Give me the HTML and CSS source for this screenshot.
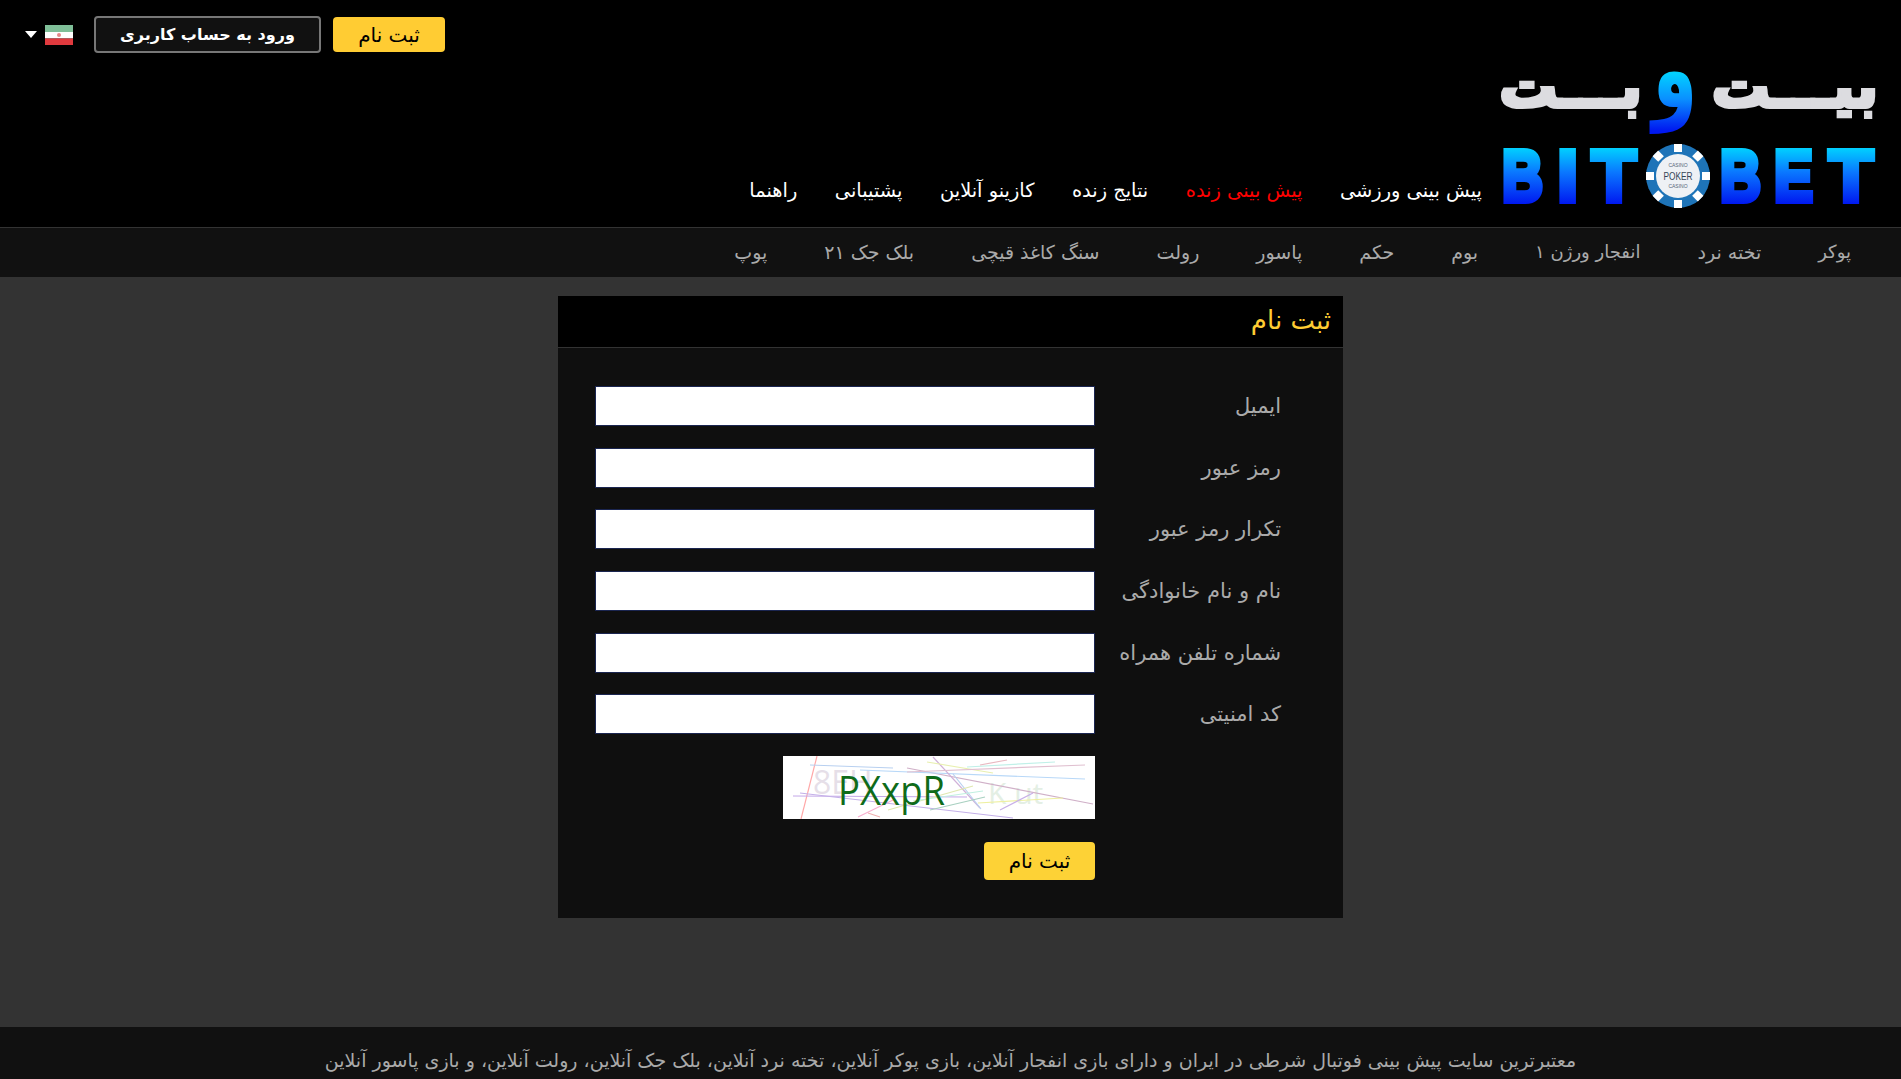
FILE: index.html
```html
<!DOCTYPE html>
<html lang="fa" dir="rtl">
<head>
<meta charset="utf-8">
<title>ثبت نام</title>
<link rel="stylesheet" href="styles.css">
</head>
<body>
<header class="header">
  <div class="topbar">
    <a class="btn btn-yellow">ثبت نام</a>
    <a class="btn btn-dark">ورود به حساب کاربری</a>
    <div class="lang">
      <svg class="flag" viewBox="0 0 28 20" width="28" height="20">
        <rect width="28" height="7" fill="#7fbf98"/>
        <rect y="7" width="28" height="6.5" fill="#fff"/>
        <rect y="13.5" width="28" height="6.5" fill="#e03a3e"/>
        <circle cx="14" cy="10" r="2" fill="#e58a8a"/>
      </svg>
      <span class="caret"></span>
    </div>
  </div>
  <div class="mainbar">
    <svg class="logo" viewBox="0 0 378 146" width="378" height="146">
      <defs>
        <linearGradient id="lg" gradientUnits="userSpaceOnUse" x1="0" y1="-32" x2="0" y2="19">
          <stop offset="0" stop-color="#00e0ff"/>
          <stop offset=".5" stop-color="#0a90ff"/>
          <stop offset="1" stop-color="#0018f0"/>
        </linearGradient>
        <linearGradient id="lgu" gradientUnits="userSpaceOnUse" x1="0" y1="82" x2="0" y2="140">
          <stop offset="0" stop-color="#00d8ff"/>
          <stop offset=".45" stop-color="#0a78ff"/>
          <stop offset="1" stop-color="#0018f0"/>
        </linearGradient>
      </defs>
      <text class="logo-fa" x="377" y="43" text-anchor="start">بیـــت</text>
      <text class="logo-fa" x="141" y="43" text-anchor="start">بـــت</text>
      <text class="logo-vav" text-anchor="middle" fill="url(#lg)" transform="translate(174 43) scale(.82 1.25)">و</text>
      <g class="logo-en">
        <text x="1" y="137" textLength="41" lengthAdjust="spacingAndGlyphs">B</text>
        <text x="56.5" y="137">I</text>
        <text x="91" y="137" textLength="44" lengthAdjust="spacingAndGlyphs">T</text>
        <text x="219" y="137" textLength="41" lengthAdjust="spacingAndGlyphs">B</text>
        <text x="273" y="137" textLength="39" lengthAdjust="spacingAndGlyphs">E</text>
        <text x="328" y="137" textLength="44" lengthAdjust="spacingAndGlyphs">T</text>
      </g>
      <circle cx="177" cy="112" r="32" fill="#1e74b8"/>
      <circle cx="177" cy="112" r="22" fill="#eef1f5"/>
      <g fill="#fff">
        <rect x="173" y="80" width="8" height="8"/>
        <rect x="173" y="136" width="8" height="8"/>
        <rect x="145" y="108" width="8" height="8"/>
        <rect x="201" y="108" width="8" height="8"/>
        <rect x="173" y="80" width="8" height="8" transform="rotate(45 177 112)"/>
        <rect x="173" y="80" width="8" height="8" transform="rotate(135 177 112)"/>
        <rect x="173" y="80" width="8" height="8" transform="rotate(225 177 112)"/>
        <rect x="173" y="80" width="8" height="8" transform="rotate(315 177 112)"/>
      </g>
      <text class="chip-s" x="177" y="103" text-anchor="middle">CASINO</text>
      <text class="chip-b" x="177" y="116" text-anchor="middle" textLength="29" lengthAdjust="spacingAndGlyphs">POKER</text>
      <text class="chip-s" x="177" y="124" text-anchor="middle">CASINO</text>
    </svg>
    <nav class="nav">
      <a>پیش بینی ورزشی</a>
      <a class="live">پیش بینی زنده</a>
      <a>نتایج زنده</a>
      <a>کازینو آنلاین</a>
      <a>پشتیبانی</a>
      <a>راهنما</a>
    </nav>
  </div>
</header>
<nav class="subnav">
  <a class="narrow">پوکر</a><a>تخته نرد</a><a class="narrow">انفجار ورژن ۱</a><a>بوم</a><a>حکم</a><a>پاسور</a><a>رولت</a><a>سنگ کاغذ قیچی</a><a>بلک جک ۲۱</a><a>پوپ</a>
</nav>
<main class="content">
  <section class="panel">
    <h1 class="panel-title">ثبت نام</h1>
    <form class="form">
      <label class="label">ایمیل</label><input class="input" type="text">
      <label class="label">رمز عبور</label><input class="input" type="password">
      <label class="label">تکرار رمز عبور</label><input class="input" type="password">
      <label class="label">نام و نام خانوادگی</label><input class="input" type="text">
      <label class="label">شماره تلفن همراه</label><input class="input" type="text">
      <label class="label">کد امنیتی</label><input class="input" type="text">
      <span></span>
      <svg class="captcha" viewBox="0 0 312 63" width="312" height="63">
        <rect width="312" height="63" fill="#fff"/>
        <text class="cap-ghost" x="30" y="38">8EH</text>
        <text class="cap-ghost2" x="205" y="48">K ut</text>
        <g class="cap-noise" fill="none">
          <path d="M34 0L18 63" stroke="#ffa8a8"/>
          <path d="M27 9L110 12" stroke="#b8d0f0" stroke-width="2"/>
          <path d="M124 12L310 48" stroke="#d0b0c8"/>
          <path d="M10 40L184 41" stroke="#c4a8e8" stroke-width="2"/>
          <path d="M17 37L230 62" stroke="#c4b0e8"/>
          <path d="M77 14L302 23" stroke="#b8d8f8" stroke-width="2"/>
          <path d="M150 1L197 52" stroke="#d0b0d8"/>
          <path d="M170 18L198 53" stroke="#b8d0f0"/>
          <path d="M147 54L202 41" stroke="#a8d0c0"/>
          <path d="M195 47L280 42" stroke="#eef0a0"/>
          <path d="M217 54L250 37" stroke="#c8b0e8"/>
          <path d="M75 61L110 44" stroke="#f8b0d0"/>
          <path d="M85 57L97 61" stroke="#f0b0b0"/>
          <path d="M144 6L210 17" stroke="#e8f0b0"/>
          <path d="M184 11L272 6" stroke="#c0f0e8"/>
          <path d="M124 16L302 9" stroke="#e0c0d0"/>
          <path d="M197 9L224 4" stroke="#e8b8c0"/>
          <path d="M105 54L190 30" stroke="#e0e8b0"/>
          <path d="M130 45L200 35" stroke="#c0f0e0"/>
        </g>
        <text class="cap-text" x="55" y="49" textLength="107" lengthAdjust="spacingAndGlyphs">PXxpR</text>
      </svg>
      <span></span>
      <button class="submit" type="button">ثبت نام</button>
    </form>
  </section>
</main>
<footer class="footer">معتبرترین سایت پیش بینی فوتبال شرطی در ایران و دارای بازی انفجار آنلاین، بازی پوکر آنلاین، تخته نرد آنلاین، بلک جک آنلاین، رولت آنلاین، و بازی پاسور آنلاین</footer>
</body>
</html>
```
FILE: styles.css
```css
* { box-sizing: border-box; }
html, body { margin: 0; height: 1079px; overflow: hidden; }
body {
  background: #333;
  font-family: "DejaVu Sans", sans-serif;
  display: flex;
  flex-direction: column;
}
a { text-decoration: none; }

.header { background: #000; height: 228px; border-bottom: 1px solid #333; flex: none; }
.topbar { height: 65px; display: flex; align-items: flex-start; direction: ltr; padding: 16px 0 0 25px; }
.lang { display: flex; flex-direction: row-reverse; align-items: center; gap: 8px; height: 37px; order: 1; margin-right: 21px; }
.flag { display: block; }
.caret { width: 0; height: 0; border-left: 6px solid transparent; border-right: 6px solid transparent; border-top: 7px solid #fff; }
.btn { display: flex; align-items: center; justify-content: center; border-radius: 4px; direction: rtl; }
.btn-yellow { order: 3; width: 112px; height: 35px; margin-top: 1px; background: #fc3; color: #000; font-size: 20px; }
.btn-dark { order: 2; width: 227px; height: 37px; margin-right: 12px; background: #111; border: 2px solid #777; color: #fff; font-weight: bold; font-size: 16px; }

.mainbar { height: 162px; display: flex; align-items: flex-end; padding: 0 22px 17px 0; }
.logo { display: block; flex: none; direction: ltr; overflow: visible; }
.logo-fa { font: bold 58px "DejaVu Sans", sans-serif; fill: #dcdce0; stroke: #dcdce0; stroke-width: 4; direction: rtl; }
.logo-vav { font: bold 88px "DejaVu Sans", sans-serif; direction: rtl; }
.logo-en text { font: bold 73px "Liberation Sans", sans-serif; fill: url(#lgu); stroke: url(#lgu); stroke-width: 6; }
.chip-s { font: 5px "Liberation Sans", sans-serif; fill: #567; }
.chip-b { font: 11px "Liberation Sans", sans-serif; fill: #345; }
.nav { display: flex; gap: 37.5px; margin-right: 19px; padding-bottom: 8px; align-items: center; }
.nav a { color: #fff; font-size: 19.4px; white-space: nowrap; }
.nav a.live { color: #f00; }

.subnav { height: 49px; background: #111; display: flex; align-items: center; gap: 57px; padding: 0 50px 2px 0; flex: none; }
.subnav a { color: #aaa; font-size: 19px; white-space: nowrap; }
.subnav a.narrow { font-size: 18px; }

.content { flex: 1; display: flex; justify-content: center; align-items: flex-start; padding: 19px 0 0 0; min-height: 0; }
.panel { width: 785px; background: #0f0f0f; height: 622px; }
.panel-title { margin: 0; height: 52px; background: #000; border-bottom: 1px solid #333; color: #fc3; font-size: 26px; font-weight: normal; padding: 0 12px 4px; display: flex; align-items: center; }
.form { display: grid; grid-template-columns: 248px 500px; row-gap: 21.67px; padding-top: 38px; align-items: center; justify-content: start; }
.label { color: #aaa; font-size: 21px; padding-right: 62px; white-space: nowrap; }
.input { height: 40px; width: 500px; border: 1px solid #1a2550; background: #fff; padding: 0 8px; display: block; border-radius: 0; outline: 0; }
.captcha { display: block; justify-self: start; direction: ltr; }
.cap-noise path { stroke-width: 1.2; }
.cap-text { font: 40px "Open Sans", sans-serif; fill: #0f6b1a; }
.cap-ghost { font: 32px "Open Sans", sans-serif; fill: #e6dfe8; }
.cap-ghost2 { font: 30px "Open Sans", sans-serif; fill: #e4efe4; }
.submit { justify-self: start; width: 111px; height: 38px; margin-top: 1px; border: 0; border-radius: 4px; background: #fdd236; color: #000; font: 20px "DejaVu Sans", sans-serif; }

.footer { height: 52px; background: #111; color: #aaa; font-size: 19px; text-align: center; padding-top: 22px; flex: none; white-space: nowrap; }
```
